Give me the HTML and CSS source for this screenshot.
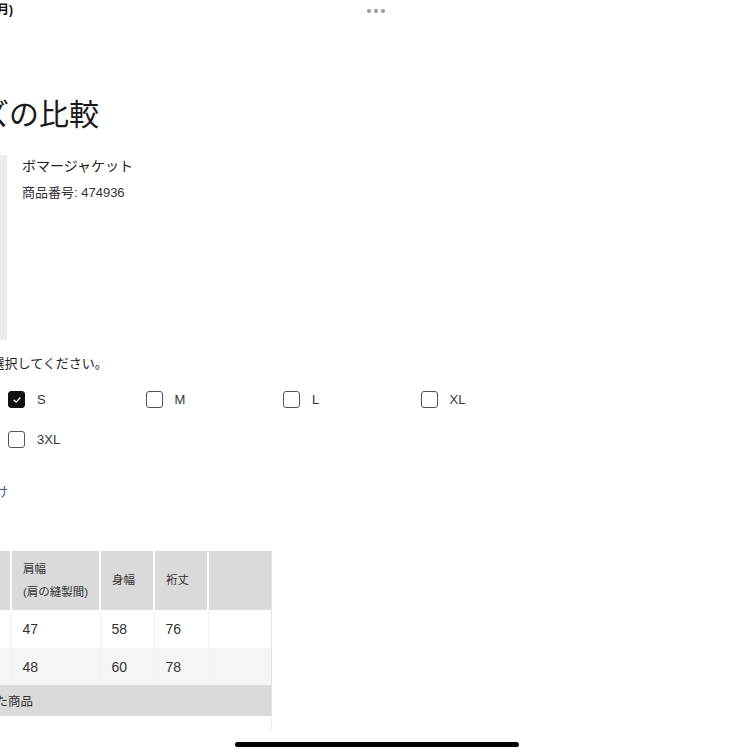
FILE: index.html
```html
<!DOCTYPE html>
<html lang="ja">
<head>
<meta charset="utf-8">
<link rel="stylesheet" href="styles.css">
</head>
<body>
<div class="status">
  <div class="time"><span>9:41 10月3日(月)</span></div>
  <div class="dots"><i></i><i></i><i></i></div>
</div>
<main class="page">
  <h1 class="title">サイズの比較</h1>
  <section class="product">
    <div class="thumb"></div>
    <div class="info">
      <div class="name">ボマージャケット</div>
      <div class="code">商品番号: 474936</div>
    </div>
  </section>
  <p class="prompt">サイズを選択してください。</p>
  <div class="sizes">
    <label class="opt"><span class="box on"><svg viewBox="0 0 12 12" width="10" height="10"><path d="M2.5 6.2 L5 8.5 L9.5 3.6" fill="none" stroke="#fff" stroke-width="1.6" stroke-linecap="round" stroke-linejoin="round"/></svg></span>S</label>
    <label class="opt"><span class="box"></span>M</label>
    <label class="opt"><span class="box"></span>L</label>
    <label class="opt"><span class="box"></span>XL</label>
    <label class="opt"><span class="box"></span>3XL</label>
  </div>
  <div class="linkrow"><a class="link">サイズの見分け</a></div>
  <div class="tablewrap">
    <table class="sz">
      <thead>
        <tr>
          <th class="c0">サイズ</th>
          <th class="c1">肩幅<br>(肩の縫製間)</th>
          <th class="c2">身幅</th>
          <th class="c3">裄丈</th>
          <th class="c4"></th>
        </tr>
      </thead>
      <tbody>
        <tr class="r1"><td>S</td><td>47</td><td>58</td><td>76</td><td></td></tr>
        <tr class="r2"><td>M</td><td>48</td><td>60</td><td>78</td><td></td></tr>
        <tr class="r3"><td colspan="5" class="cap">比較した商品</td></tr>
      </tbody>
    </table>
    <div class="tail"></div>
  </div>
</main>
<div class="home"></div>
</body>
</html>
```
FILE: styles.css
```css
html, body {
  margin: 0;
  padding: 0;
  background: #fff;
}
body {
  width: 755px;
  height: 755px;
  overflow: hidden;
  position: relative;
  font-family: "Liberation Sans", "Noto Sans CJK JP", sans-serif;
  color: #222;
}
.status {
  height: 22px;
  position: relative;
}
.time {
  width: 13px;
  display: flex;
  justify-content: flex-end;
  padding-top: 3px;
  font-size: 12px;
  font-weight: bold;
  line-height: 15px;
  color: #111;
  white-space: nowrap;
}
.dots {
  position: absolute;
  left: 367px;
  top: 9px;
  display: flex;
  gap: 3px;
}
.dots i {
  width: 4px;
  height: 4px;
  border-radius: 50%;
  background: #9a9a9a;
  display: block;
}
.page {
  margin-left: -80px;
  width: 835px;
}
.title {
  margin: 72px 0 0 0;
  font-size: 30px;
  font-weight: normal;
  line-height: 36px;
  color: #1a1a1a;
  font-family: "Noto Sans CJK JP", sans-serif;
}
.product {
  display: flex;
  margin-top: 25px;
  gap: 15px;
}
.thumb {
  width: 87px;
  height: 185px;
  background: #ebebeb;
}
.info {
  padding-top: 2px;
}
.name {
  font-size: 14px;
  line-height: 18px;
  color: #222;
}
.code {
  margin-top: 9px;
  font-size: 13px;
  line-height: 17px;
  color: #333;
}
.prompt {
  margin: 14px 0 0 20px;
  font-size: 13px;
  line-height: 20px;
  color: #222;
}
.sizes {
  margin: 17px 0 0 88px;
  display: grid;
  grid-template-columns: repeat(4, 137.5px);
  row-gap: 23px;
}
.opt {
  display: flex;
  align-items: center;
  gap: 12px;
  font-size: 13px;
  line-height: 17px;
  color: #333;
}
.box {
  width: 17px;
  height: 17px;
  box-sizing: border-box;
  border: 1.5px solid #555;
  border-radius: 3px;
  display: flex;
  align-items: center;
  justify-content: center;
}
.box.on {
  background: #111;
  border-color: #111;
}
.linkrow {
  margin: 35px 0 0 0;
  width: 88px;
  display: flex;
  justify-content: flex-end;
}
.link {
  font-size: 13px;
  line-height: 18px;
  color: #3f5593;
  white-space: nowrap;
}
.tablewrap {
  margin-top: 50px;
  width: 352px;
}
.sz {
  border-collapse: collapse;
  width: 352px;
  table-layout: fixed;
}
.sz th {
  background: #dadada;
  height: 59px;
  box-sizing: border-box;
  text-align: left;
  vertical-align: middle;
  font-weight: normal;
  font-size: 11.5px;
  line-height: 23px;
  color: #333;
  padding: 0 0 0 11px;
  border-right: 2px solid #fff;
}
.sz th.c4 { border-right: 1px solid #e4e4e4; }
.sz .c0 { width: 91px; }
.sz .c1 { width: 89px; }
.sz .c2 { width: 54px; }
.sz .c3 { width: 54px; }
.sz td {
  font-size: 14px;
  padding: 0 0 0 11px;
  color: #333;
  border-right: 1px solid #f2f2f2;
}
.sz td:last-child { border-right: 1px solid #e4e4e4; }
.r1 td { height: 38px; background: #fff; }
.r2 td { height: 37px; background: #f5f5f5; }
.r3 td {
  height: 31px;
  background: #dadada;
  font-size: 12.5px;
  padding-left: 38px;
  color: #333;
}
.tail {
  margin-left: 351px;
  width: 1px;
  height: 14px;
  background: #ececec;
}
.home {
  position: absolute;
  left: 235px;
  top: 742px;
  width: 284px;
  height: 5px;
  border-radius: 3px;
  background: #000;
}
```
